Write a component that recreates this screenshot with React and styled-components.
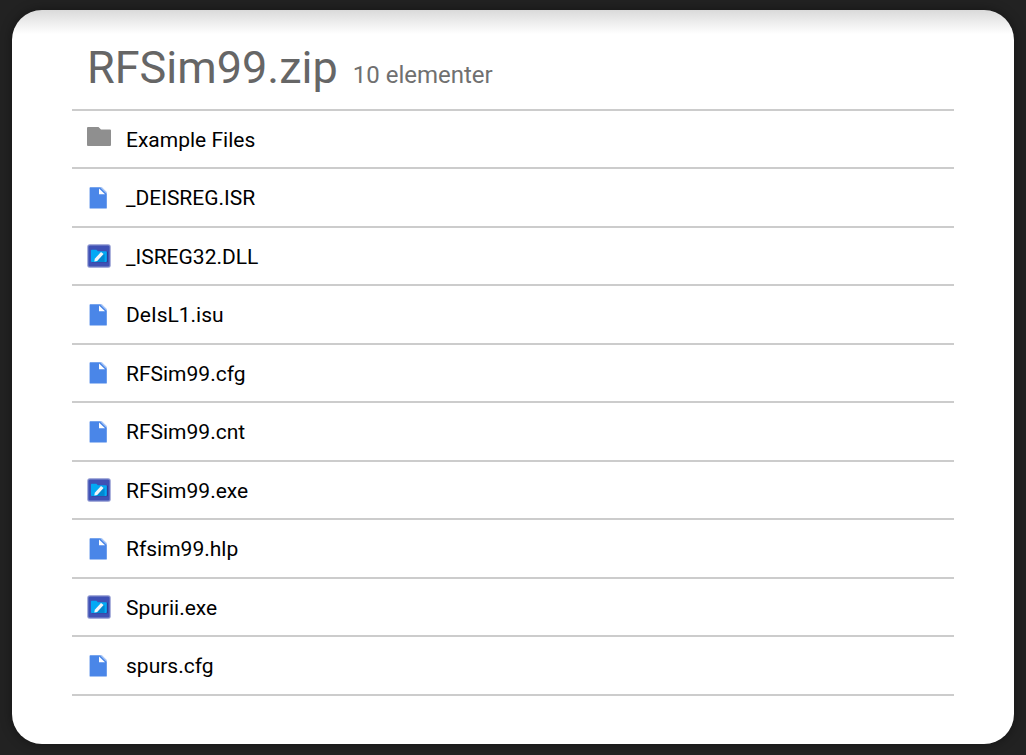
import React from "react";
import styled, { createGlobalStyle } from "styled-components";

const GlobalStyle = createGlobalStyle`
  * {
    box-sizing: border-box;
  }
  body {
    margin: 0;
    background: #222222;
    font-family: Roboto, sans-serif;
    color: black;
  }
`

const Page = styled.div`
  min-height: 100vh;
  padding: 10px 12px 11px;
  display: flex;
`

const Card = styled.main`
  flex: 1;
  padding: 0 60px 48px;
  border-radius: 30px;
  background: linear-gradient(#dadada, white 24px);
  box-shadow: 0 0 12px rgba(0, 0, 0, 0.4);
`

const Header = styled.header`
  display: flex;
  align-items: baseline;
  gap: 15px;
  height: 101px;
  padding: 31px 15px 0;
  border-bottom: 2px solid #cccccc;
  color: #666666;
`

const Title = styled.h1`
  margin: 0;
  font-size: 45px;
  font-weight: 400;
  line-height: 54px;
`

const Count = styled.span`
  font-size: 24px;
  color: #707070;
`

const FileList = styled.ul`
  margin: 0;
  padding: 0;
  list-style: none;
`

const FileRow = styled.li`
  display: flex;
  align-items: center;
  gap: 15px;
  height: 58px;
  padding: 0 15px;
  border-bottom: 2px solid #cccccc;

  &:nth-child(even) {
    height: 59px;
  }
`

const FileName = styled.span`
  padding-top: 1px;
  font-size: 21px;
  line-height: 24px;
`

const Icon = styled.svg`
  flex: none;
  width: 24px;
  height: 24px;
`

function FolderIcon() {
    return (
        <Icon viewBox="0 0 24 24" aria-hidden="true">
            <path fill="#8f8f8f" d="M1 0h10.5l2.5 2.5h9a1 1 0 0 1 1 1V18a1 1 0 0 1-1 1H1a1 1 0 0 1-1-1V1a1 1 0 0 1 1-1z"/>
        </Icon>
    );
}

function DocumentIcon() {
    return (
        <Icon viewBox="0 0 24 24" aria-hidden="true">
            <path fill="#4a86e8" d="M3.2 1.3H14l5.8 6v14.6a.6.6 0 0 1-.6.6h-16a.6.6 0 0 1-.6-.6v-20a.6.6 0 0 1 .6-.6z"/>
            <path fill="#a9c6f5" d="M13 1.3h2l4.8 4.7v2z"/>
            <path fill="white" d="M12 2.6v5.7h6z"/>
        </Icon>
    );
}

function ProgramIcon() {
    return (
        <Icon viewBox="0 0 24 24" aria-hidden="true">
            <rect x="0.3" y="0.3" width="23.4" height="23.4" rx="2.5" fill="#8b94cf"/>
            <rect x="1.4" y="1.4" width="21.2" height="21.2" rx="1.5" fill="#3f51b5"/>
            <path fill="#2b398c" d="M5 18.2h15.8V8l-1-1v10.2H5z"/>
            <path fill="#03a9f4" d="M4.8 5.8h4.6l1.4 1.4h8.2a.8.8 0 0 1 .8.8v9.2a.8.8 0 0 1-.8.8H4.8a.8.8 0 0 1-.8-.8V6.6a.8.8 0 0 1 .8-.8z"/>
            <path fill="#0288d1" d="M9.4 17.2l1.2.8h7V10.4l-1.6-1z"/>
            <path fill="#f2f5f8" d="M7.8 14.7L14 8l2.6 2.1-6.4 6.8-2.9.5z"/>
        </Icon>
    );
}

const icons = {
    folder: FolderIcon,
    document: DocumentIcon,
    program: ProgramIcon,
}

const files = [
    {name: "Example Files", type: "folder"},
    {name: "_DEISREG.ISR", type: "document"},
    {name: "_ISREG32.DLL", type: "program"},
    {name: "DeIsL1.isu", type: "document"},
    {name: "RFSim99.cfg", type: "document"},
    {name: "RFSim99.cnt", type: "document"},
    {name: "RFSim99.exe", type: "program"},
    {name: "Rfsim99.hlp", type: "document"},
    {name: "Spurii.exe", type: "program"},
    {name: "spurs.cfg", type: "document"},
]

function App() {
    return (
        <Page>
            <GlobalStyle/>
            <Card>
                <Header>
                    <Title>RFSim99.zip</Title>
                    <Count>{files.length} elementer</Count>
                </Header>
                <FileList>
                    {files.map(({name, type}) => {
                        const FileIcon = icons[type];
                        return (
                            <FileRow key={name}>
                                <FileIcon/>
                                <FileName>{name}</FileName>
                            </FileRow>
                        );
                    })}
                </FileList>
            </Card>
        </Page>
    );
}

export default App;
